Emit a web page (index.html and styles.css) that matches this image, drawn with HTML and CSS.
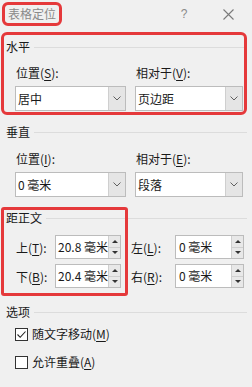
FILE: index.html
```html
<!DOCTYPE html>
<html>
    <head>
        <meta charset="utf-8">
        <title>表格定位</title>
        <link rel="stylesheet" href="styles.css">
    </head>
    <body>
        <div class="dialog">
            <div class="titlebar">
                <span class="title mark">表格定位</span>
                <span class="help">?</span>
                <svg class="close" width="11" height="11" viewBox="0 0 11 11"><path d="M0.5 0.5 L10.5 10.5 M10.5 0.5 L0.5 10.5" stroke="#7a7a7a" stroke-width="1.1" fill="none"/></svg>
            </div>

            <div class="group horiz mark">
                <div class="legend"><span>水平</span></div>
                <div class="row">
                    <div class="field left">
                        <div class="label">位置(<u>S</u>):</div>
                        <div class="select"><span class="value">居中</span><span class="drop"><svg width="8" height="5" viewBox="0 0 8 5"><path d="M0.5 0.5 L4 4 L7.5 0.5" stroke="#606060" fill="none"/></svg></span></div>
                    </div>
                    <div class="field right">
                        <div class="label">相对于(<u>V</u>):</div>
                        <div class="select"><span class="value">页边距</span><span class="drop"><svg width="8" height="5" viewBox="0 0 8 5"><path d="M0.5 0.5 L4 4 L7.5 0.5" stroke="#606060" fill="none"/></svg></span></div>
                    </div>
                </div>
            </div>

            <div class="group vert">
                <div class="legend"><span>垂直</span></div>
                <div class="row">
                    <div class="field left">
                        <div class="label">位置(<u>I</u>):</div>
                        <div class="select"><span class="value">0 毫米</span><span class="drop"><svg width="8" height="5" viewBox="0 0 8 5"><path d="M0.5 0.5 L4 4 L7.5 0.5" stroke="#606060" fill="none"/></svg></span></div>
                    </div>
                    <div class="field right">
                        <div class="label">相对于(<u>E</u>):</div>
                        <div class="select"><span class="value">段落</span><span class="drop"><svg width="8" height="5" viewBox="0 0 8 5"><path d="M0.5 0.5 L4 4 L7.5 0.5" stroke="#606060" fill="none"/></svg></span></div>
                    </div>
                </div>
            </div>

            <div class="group dist">
                <span class="markbox"></span>
                <div class="legend"><span>距正文</span></div>
                <div class="spinrow">
                    <span class="slabel s1">上(<u>T</u>):</span>
                    <div class="spin s1"><span class="num">20.8 毫米</span><span class="arrows"><span class="up"></span><span class="down"></span></span></div>
                    <span class="slabel s2">左(<u>L</u>):</span>
                    <div class="spin s2"><span class="num">0 毫米</span><span class="arrows"><span class="up"></span><span class="down"></span></span></div>
                </div>
                <div class="spinrow">
                    <span class="slabel s1">下(<u>B</u>):</span>
                    <div class="spin s1"><span class="num">20.4 毫米</span><span class="arrows"><span class="up"></span><span class="down"></span></span></div>
                    <span class="slabel s2">右(<u>R</u>):</span>
                    <div class="spin s2"><span class="num">0 毫米</span><span class="arrows"><span class="up"></span><span class="down"></span></span></div>
                </div>
            </div>

            <div class="group opts">
                <div class="legend"><span>选项</span></div>
                <div class="check first">
                    <span class="box"><svg width="11" height="11" viewBox="0 0 11 11"><path d="M1.5 5.5 L4.2 8.3 L9.5 2.5" stroke="#222" stroke-width="1.1" fill="none"/></svg></span>
                    <span>随文字移动(<u>M</u>)</span>
                </div>
                <div class="check">
                    <span class="box"></span>
                    <span>允许重叠(<u>A</u>)</span>
                </div>
            </div>
        </div>
    </body>
</html>
```

FILE: styles.css
```css
*{
    padding: 0;
    margin: 0;
    box-sizing: border-box;
}
body {
    width: 252px;
    height: 387px;
    overflow: hidden;
    background-color: #f0f0f0;
    font-family: "Microsoft YaHei", "Noto Sans CJK SC", sans-serif;
    font-size: 12px;
    color: #1a1a1a;
}
u {
    text-decoration-thickness: 1px;
    text-underline-offset: 2px;
}
.mark {
    outline: 3px solid #e5393b;
    border-radius: 3px;
}
.titlebar {
    height: 28px;
    display: flex;
    align-items: center;
    padding-left: 5px;
}
.title {
    height: 18px;
    line-height: 18px;
    padding: 0 3px;
    color: #8a8a8a;
}
.help {
    margin-left: auto;
    width: 12px;
    text-align: center;
    color: #8a8a8a;
    font-family: "Liberation Sans", sans-serif;
    font-size: 12px;
}
.close {
    margin-left: 33px;
    margin-right: 18px;
}
.group {
    margin: 0 8px 0 4px;
    padding-left: 2px;
}
.legend {
    display: flex;
    align-items: center;
    height: 16px;
    line-height: 16px;
}
.legend::after {
    content: "";
    flex: 1;
    height: 1px;
    margin-left: 4px;
    margin-right: -3px;
    background-color: #dcdcdc;
}
.horiz {
    margin-top: 7px;
    padding-top: 4px;
    padding-bottom: 1px;
}
.horiz .legend::after {
    margin-right: 0;
}
.vert {
    margin-top: 12px;
}
.row {
    display: flex;
    gap: 9px;
    padding-left: 9px;
}
.field.left {
    width: 111px;
}
.field.right {
    width: 108px;
}
.label {
    height: 16px;
    line-height: 16px;
    padding-left: 1px;
    margin-top: 10px;
    margin-bottom: 5px;
}
.vert .label {
    margin-top: 11px;
}
.select {
    display: flex;
    height: 25px;
    border: 1px solid #bcbcbc;
    background-color: #fff;
}
.select .value {
    flex: 1;
    line-height: 23px;
    padding-left: 2px;
}
.select .drop {
    width: 17px;
    display: flex;
    align-items: center;
    justify-content: center;
    background-color: #e5e5e5;
    border-left: 1px solid #cfcfcf;
}
.dist {
    position: relative;
    margin-top: 13px;
}
.markbox {
    position: absolute;
    left: -3px;
    top: -3px;
    width: 127px;
    height: 89px;
    border: 3px solid #e5393b;
    border-radius: 3px;
    z-index: 10;
}
.spinrow {
    display: flex;
    align-items: center;
    padding-left: 10px;
    margin-top: 9px;
}
.spinrow + .spinrow {
    margin-top: 5px;
}
.slabel.s1 {
    width: 39px;
}
.slabel.s2 {
    width: 44px;
    margin-left: 10px;
}
.spin {
    display: flex;
    height: 24px;
    border: 1px solid #bcbcbc;
    background-color: #fff;
}
.spin.s1 {
    width: 66px;
}
.spin.s2 {
    width: 69px;
}
.spin .num {
    flex: 1;
    line-height: 22px;
    padding-left: 2px;
    white-space: nowrap;
    overflow: hidden;
}
.spin.s2 .num {
    padding-left: 3px;
}
.arrows {
    width: 12px;
    display: flex;
    flex-direction: column;
    border-left: 1px solid #cfcfcf;
}
.arrows span {
    flex: 1;
    display: flex;
    align-items: center;
    justify-content: center;
    background-color: #e8e8e8;
}
.arrows .up {
    border-bottom: 1px solid #cfcfcf;
}
.arrows .up::before {
    content: "";
    border-left: 3px solid transparent;
    border-right: 3px solid transparent;
    border-bottom: 3px solid #333;
}
.arrows .down::before {
    content: "";
    border-left: 3px solid transparent;
    border-right: 3px solid transparent;
    border-top: 3px solid #333;
}
.opts {
    margin-top: 16px;
}
.check {
    display: flex;
    align-items: center;
    height: 16px;
    line-height: 16px;
    padding-left: 9px;
    margin-top: 12px;
}
.check.first {
    margin-top: 6px;
}
.check .box {
    width: 13px;
    height: 13px;
    border: 1px solid #333;
    background-color: #fff;
    margin-right: 4px;
    display: flex;
    align-items: center;
    justify-content: center;
}
```
